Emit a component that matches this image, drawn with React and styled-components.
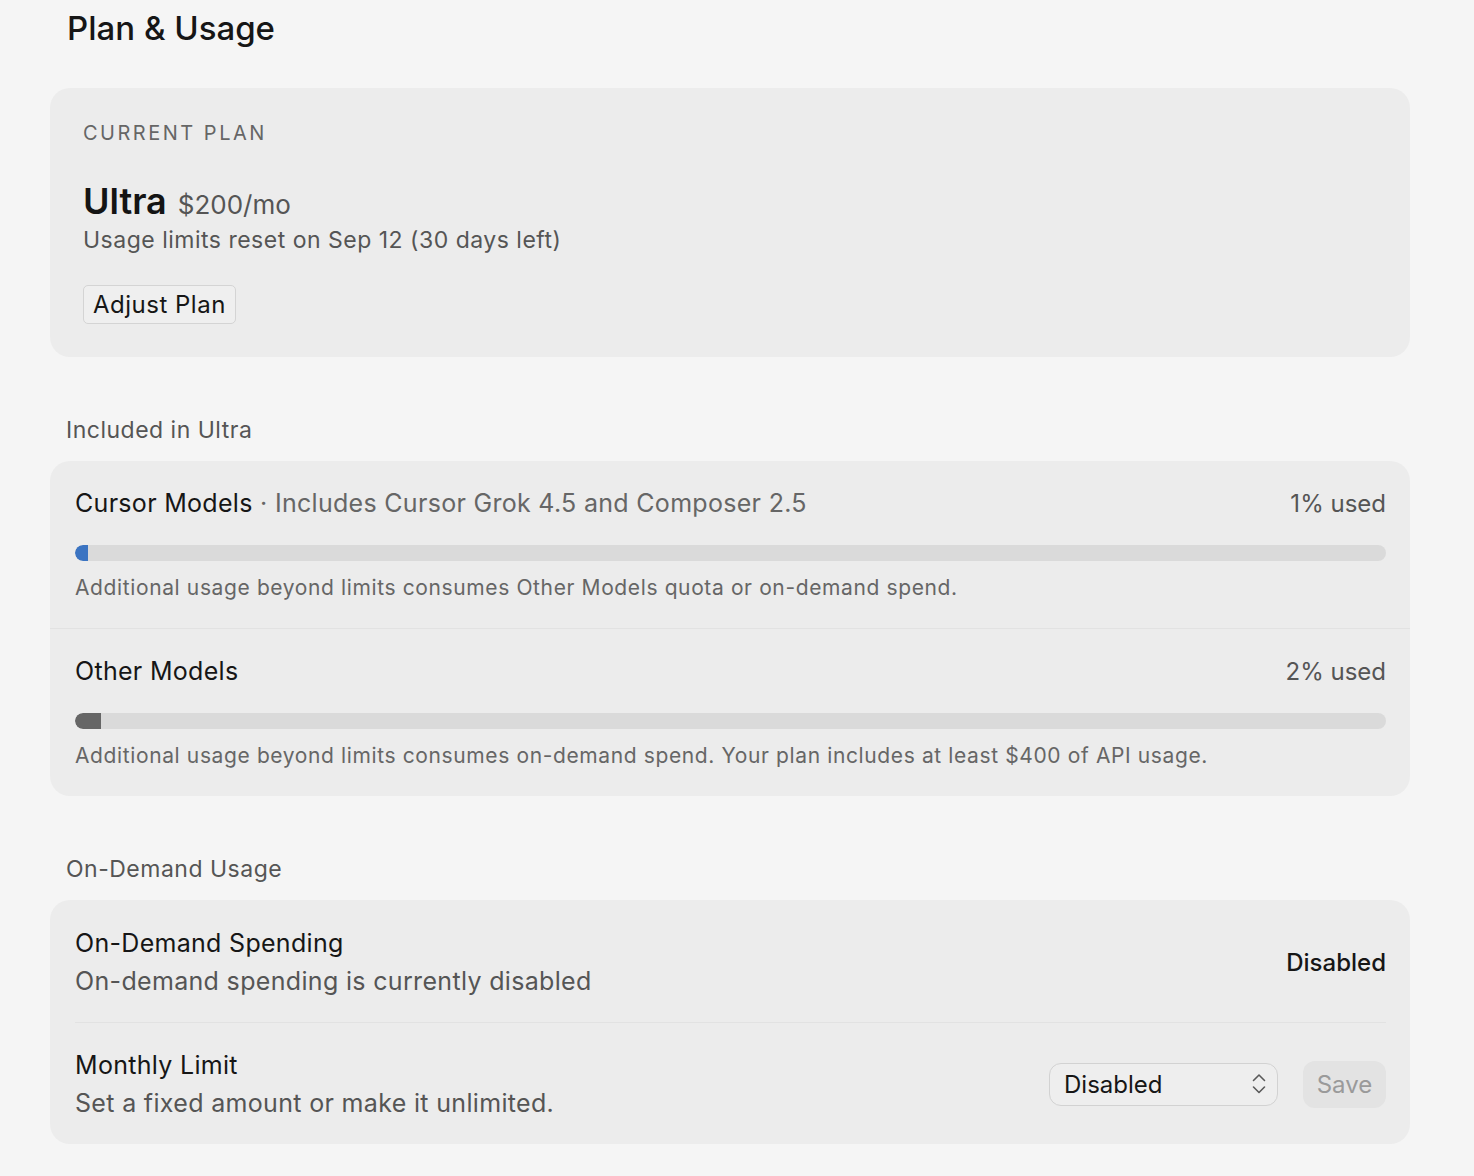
import React from "react";
import styled, { createGlobalStyle } from "styled-components";

const GlobalStyle = createGlobalStyle`
  html, body {
    margin: 0;
    padding: 0;
    background: #f5f5f5;
  }
  body {
    font-family: Inter, "Noto Sans", "Liberation Sans", sans-serif;
    color: #1a1a1a;
    -webkit-font-smoothing: antialiased;
  }
`;

const Page = styled.main`
  width: 1360px;
  padding: 8px 0 40px 50px;
  display: flex;
  flex-direction: column;
`;

const PageTitle = styled.h1`
  margin: 0 0 40px 17px;
  font-size: 33px;
  line-height: 40px;
  font-weight: 500;
  color: #161616;
`;

const Card = styled.section`
  background: #ececec;
  border-radius: 20px;
  display: flex;
  flex-direction: column;
`;

const PlanCard = styled(Card)`
  padding: 33px 33px 33px;
  align-items: flex-start;
`;

const Eyebrow = styled.div`
  font-size: 20px;
  line-height: 24px;
  letter-spacing: 2.5px;
  text-transform: uppercase;
  color: #666;
`;

const PlanName = styled.div`
  margin-top: 34px;
  display: flex;
  align-items: baseline;
  gap: 11px;
  line-height: 44px;
`;

const PlanTitle = styled.span`
  font-size: 36px;
  font-weight: 600;
  color: #141414;
`;

const PlanPrice = styled.span`
  font-size: 26px;
  color: #555;
`;

const PlanNote = styled.div`
  margin-top: -1px;
  font-size: 23px;
  line-height: 28px;
  letter-spacing: 0.5px;
  color: #555;
`;

const OutlineButton = styled.button`
  margin-top: 31px;
  height: 39px;
  padding: 0 9px;
  border: 1.5px solid #d4d4d4;
  border-radius: 5px;
  background: #efefef;
  font-family: inherit;
  font-size: 24px;
  letter-spacing: 0.5px;
  color: #161616;
`;

const SectionLabel = styled.h2`
  margin: 59px 0 17px 16px;
  font-size: 23px;
  line-height: 28px;
  font-weight: 400;
  letter-spacing: 0.5px;
  color: #555;
`;

const UsageRow = styled.div`
  padding: 27px 24px 27px 25px;
  display: flex;
  flex-direction: column;
  & + & {
    border-top: 1.5px solid #e2e2e2;
  }
`;

const UsageHead = styled.div`
  display: flex;
  justify-content: space-between;
  align-items: baseline;
  line-height: 30px;
`;

const ModelLabel = styled.span`
  font-size: 25px;
  letter-spacing: 0.3px;
`;

const ModelName = styled.span`
  color: #161616;
`;

const ModelNote = styled.span`
  color: #666;
`;

const UsedText = styled.span`
  font-size: 24px;
  color: #555;
`;

const Track = styled.div`
  margin-top: 26px;
  height: 16px;
  border-radius: 8px;
  background: #dadada;
  overflow: hidden;
`;

const Fill = styled.div`
  height: 100%;
  border-radius: 8px 0 0 8px;
  background: ${(p) => p.$color};
`;

const UsageNote = styled.p`
  margin: 14px 0 0;
  font-size: 21px;
  line-height: 26px;
  letter-spacing: 0.62px;
  color: #666;
`;

const SettingsCard = styled(Card)`
  padding: 0 24px 0 25px;
`;

const SettingRow = styled.div`
  padding: 27px 0 25px;
  display: flex;
  justify-content: space-between;
  align-items: center;
  & + & {
    border-top: 1.5px solid #e2e2e2;
    padding-top: 26px;
  }
`;

const SettingText = styled.div`
  display: flex;
  flex-direction: column;
  gap: 6px;
`;

const SettingTitle = styled.div`
  font-size: 25px;
  line-height: 32px;
  letter-spacing: 0.3px;
  color: #161616;
`;

const SettingNote = styled.div`
  font-size: 25px;
  line-height: 32px;
  letter-spacing: 0.33px;
  color: #555;
`;

const StatusText = styled.span`
  font-size: 24px;
  font-weight: 500;
  color: #161616;
`;

const Controls = styled.div`
  display: flex;
  align-items: center;
  gap: 25px;
`;

const SelectBox = styled.div`
  position: relative;
  width: 229px;
  height: 43px;
  box-sizing: border-box;
  border: 1.5px solid #d2d2d2;
  border-radius: 12px;
  background: #eeeeee;
  display: flex;
  align-items: center;
  justify-content: space-between;
  padding: 0 11px 0 14px;
  font-size: 24px;
  color: #161616;
`;

const SaveButton = styled.button`
  height: 47px;
  width: 83px;
  border: none;
  border-radius: 12px;
  background: #e3e3e3;
  font-family: inherit;
  font-size: 24px;
  color: #9a9a9a;
`;

const UpDown = () => (
  <svg width="14" height="22" viewBox="0 0 14 22" fill="none">
    <path d="M1.5 7.5 L7 2 L12.5 7.5" stroke="#5a5a5a" strokeWidth="1.6" strokeLinecap="round" strokeLinejoin="round" />
    <path d="M1.5 14 L7 19.5 L12.5 14" stroke="#5a5a5a" strokeWidth="1.6" strokeLinecap="round" strokeLinejoin="round" />
  </svg>
);

const usage = [
  {
    name: "Cursor Models",
    note: "Includes Cursor Grok 4.5 and Composer 2.5",
    used: 1,
    fill: 13,
    color: "#3b74c2",
    text: "Additional usage beyond limits consumes Other Models quota or on-demand spend.",
  },
  {
    name: "Other Models",
    used: 2,
    fill: 26,
    color: "#666666",
    text: "Additional usage beyond limits consumes on-demand spend. Your plan includes at least $400 of API usage.",
  },
];

export default function App() {
  return (
    <>
      <GlobalStyle />
      <Page>
        <PageTitle>Plan &amp; Usage</PageTitle>

        <PlanCard>
          <Eyebrow>Current Plan</Eyebrow>
          <PlanName>
            <PlanTitle>Ultra</PlanTitle>
            <PlanPrice>$200/mo</PlanPrice>
          </PlanName>
          <PlanNote>Usage limits reset on Sep 12 (30 days left)</PlanNote>
          <OutlineButton>Adjust Plan</OutlineButton>
        </PlanCard>

        <SectionLabel>Included in Ultra</SectionLabel>
        <Card>
          {usage.map((u) => (
            <UsageRow key={u.name}>
              <UsageHead>
                <ModelLabel>
                  <ModelName>{u.name}</ModelName>
                  {u.note && <ModelNote> · {u.note}</ModelNote>}
                </ModelLabel>
                <UsedText>{u.used}% used</UsedText>
              </UsageHead>
              <Track>
                <Fill $color={u.color} style={{ width: u.fill }} />
              </Track>
              <UsageNote>{u.text}</UsageNote>
            </UsageRow>
          ))}
        </Card>

        <SectionLabel>On-Demand Usage</SectionLabel>
        <SettingsCard>
          <SettingRow>
            <SettingText>
              <SettingTitle>On-Demand Spending</SettingTitle>
              <SettingNote>On-demand spending is currently disabled</SettingNote>
            </SettingText>
            <StatusText>Disabled</StatusText>
          </SettingRow>
          <SettingRow>
            <SettingText>
              <SettingTitle>Monthly Limit</SettingTitle>
              <SettingNote>Set a fixed amount or make it unlimited.</SettingNote>
            </SettingText>
            <Controls>
              <SelectBox>
                <span>Disabled</span>
                <UpDown />
              </SelectBox>
              <SaveButton>Save</SaveButton>
            </Controls>
          </SettingRow>
        </SettingsCard>
      </Page>
    </>
  );
}
